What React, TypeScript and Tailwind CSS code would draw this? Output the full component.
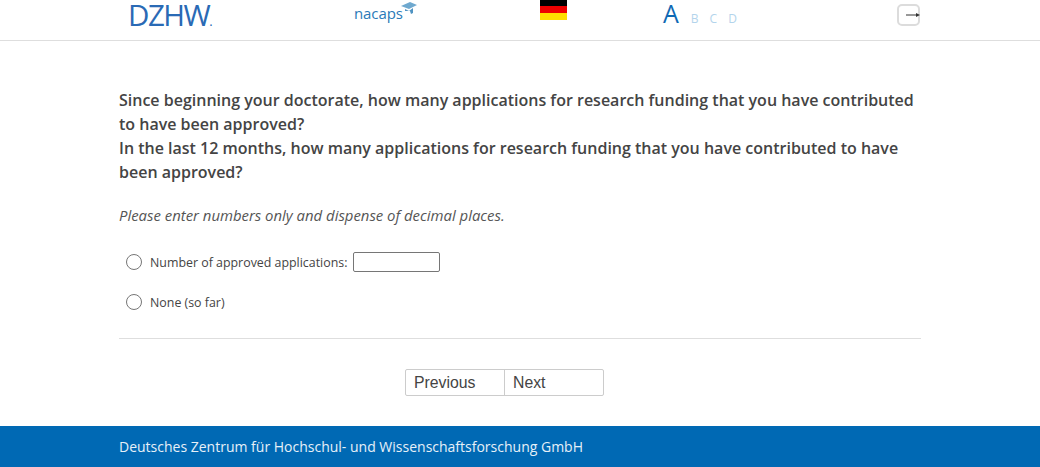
import React from 'react';

const openSans = "font-['Open_Sans','Noto_Sans',sans-serif]";

function Radio() {
  return <span className="w-4 h-4 rounded-full border border-[#767676] bg-white shrink-0" />;
}

function Header() {
  return (
    <header className="h-[41px] border-b border-[#dedede] flex justify-center overflow-hidden">
      <div className="w-[802px] h-10 flex items-start">
        <div className="w-[235px] pl-[9px]">
          <span className="block pt-[1px] text-[29.5px] leading-[28px] tracking-[-1.5px] text-[#2a6ab5] font-['Open_Sans',sans-serif] font-normal">
            DZHW<span className="text-[13px]">.</span>
          </span>
        </div>
        <div className="w-[186px] flex items-start">
          <span className={`mt-[3px] text-[15px] leading-5 tracking-[-0.1px] text-[#2a7ab8] ${openSans}`}>nacaps</span>
          <svg width="17" height="15" viewBox="0 0 17 15" className="mt-[1px] -ml-[3px]">
            <path d="M1 5 L10 1 L17 4 L9 8 Z" fill="#6fa9cf" />
            <path d="M5 8 L9 10 L13 7 L13 12 L11 13 L10 10 L5 10 Z" fill="#4f93c2" />
          </svg>
        </div>
        <div className="w-[123px]">
          <div className="w-[27px] h-5 flex flex-col">
            <div className="h-[6px] bg-black" />
            <div className="h-[7px] bg-[#ee0000]" />
            <div className="h-[7px] bg-[#ffdd00]" />
          </div>
        </div>
        <div className="w-[234px] flex items-baseline">
          <span className={`text-[25px] leading-[27px] text-[#0f69b4] ${openSans}`}>A</span>
          <span className={`ml-[12px] text-[12px] text-[#b3d4ec] ${openSans}`}>B</span>
          <span className={`ml-[11px] text-[12px] text-[#b3d4ec] ${openSans}`}>C</span>
          <span className={`ml-[11px] text-[12px] text-[#b3d4ec] ${openSans}`}>D</span>
        </div>
        <div className="mt-1 w-[23px] h-[22px] rounded-[5px] border-2 border-[#dcdcdc] flex items-center justify-end">
          <svg width="14" height="6" viewBox="0 0 14 6" className="-mr-[2px] mt-[-1px]">
            <path d="M0 3 H10" stroke="#333" strokeWidth="1" />
            <path d="M10 1 L14 3 L10 5 Z" fill="#333" />
          </svg>
        </div>
      </div>
    </header>
  );
}

export default function App() {
  return (
    <div className={`w-[1040px] h-[467px] flex flex-col bg-white overflow-hidden ${openSans}`}>
      <Header />
      <main className="flex-1 flex justify-center">
        <div className="w-[802px]">
          <div className="pt-[47px] text-[16px] leading-6 font-semibold text-[#444444]">
            <p>Since beginning your doctorate, how many applications for research funding that you have contributed to have been approved?</p>
            <p>In the last 12 months, how many applications for research funding that you have contributed to have been approved?</p>
          </div>
          <p className="mt-[19px] text-[14.9px] leading-[24px] italic text-[#555555]">
            Please enter numbers only and dispense of decimal places.
          </p>
          <div className="mt-[25px] pl-[7px] flex items-center h-5 text-[12.4px] font-medium text-[#444444]">
            <Radio />
            <span className="ml-2 pt-[2px]">Number of approved applications:</span>
            <span className="ml-[6px] w-[87px] h-5 border border-[#767676] rounded-[2px] bg-white" />
          </div>
          <div className="mt-[20px] pl-[7px] flex items-center h-5 text-[12.4px] font-medium text-[#444444]">
            <Radio />
            <span className="ml-2 pt-[2px]">None (so far)</span>
          </div>
          <div className="mt-[26px] border-t border-[#dedede]" />
          <div className="mt-[30px] pl-[286px] flex">
            <div className="flex h-[27px] w-[199px] border border-[#cccccc] rounded-[2px] font-['Liberation_Sans',Arial,sans-serif] text-[15.8px] text-[#444444]">
              <div className="w-[99px] border-r border-[#cccccc] pl-2 leading-[25px]">Previous</div>
              <div className="flex-1 pl-2 leading-[25px]">Next</div>
            </div>
          </div>
        </div>
      </main>
      <footer className="h-[41px] bg-[#0069b4] flex justify-center items-center">
        <div className="w-[802px] text-[14px] text-[#e6f0f8]">Deutsches Zentrum für Hochschul- und Wissenschaftsforschung GmbH</div>
      </footer>
    </div>
  );
}
